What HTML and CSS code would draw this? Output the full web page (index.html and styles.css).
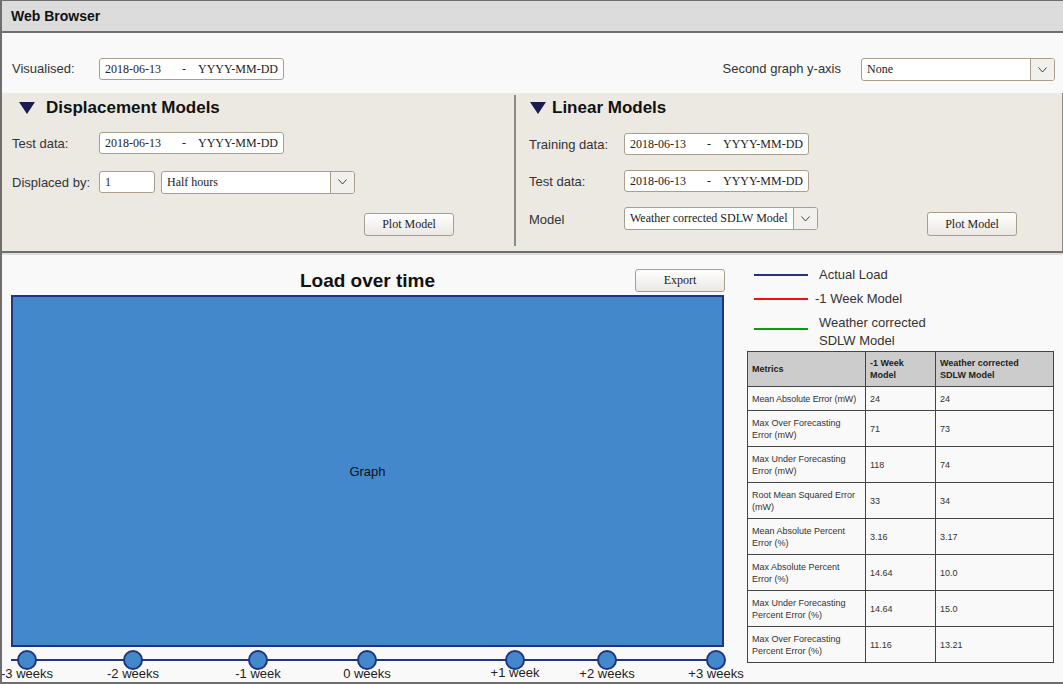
FILE: index.html
```html
<!DOCTYPE html>
<html>
<head>
<meta charset="utf-8">
<link rel="stylesheet" href="styles.css">
</head>
<body>
<div class="app">
  <div class="titlebar">Web Browser</div>

  <div class="toprow">
    <span class="label lbl-left">Visualised:</span>
    <div class="date"><span>2018-06-13</span><span class="dash">-</span><span class="ph">YYYY-MM-DD</span></div>
    <span class="spacer"></span>
    <span class="label">Second graph y-axis</span>
    <div class="select sel-none"><span class="sel-text">None</span><span class="sel-btn"><svg width="9" height="6" viewBox="0 0 9 6"><polyline points="0.5,0.5 4.5,5 8.5,0.5" fill="none" stroke="#444" stroke-width="1"/></svg></span></div>
  </div>

  <div class="panels">
    <div class="panel panel-left">
      <div class="heading"><svg class="tri" width="16" height="12" viewBox="0 0 16 12"><polygon points="0,0 16,0 8,12" fill="#1c1c4e"/></svg><span>Displacement Models</span></div>
      <div class="row r1">
        <span class="label lbl-left">Test data:</span>
        <div class="date"><span>2018-06-13</span><span class="dash">-</span><span class="ph">YYYY-MM-DD</span></div>
      </div>
      <div class="row r2">
        <span class="label lbl-left">Displaced by:</span>
        <div class="num">1</div>
        <div class="select"><span class="sel-text">Half hours</span><span class="sel-btn"><svg width="9" height="6" viewBox="0 0 9 6"><polyline points="0.5,0.5 4.5,5 8.5,0.5" fill="none" stroke="#444" stroke-width="1"/></svg></span></div>
      </div>
      <div class="row r3 btnrow-left">
        <button class="btn">Plot Model</button>
      </div>
    </div>
    <div class="divider"></div>
    <div class="panel panel-right">
      <div class="heading"><svg class="tri" width="16" height="12" viewBox="0 0 16 12"><polygon points="0,0 16,0 8,12" fill="#1c1c4e"/></svg><span>Linear Models</span></div>
      <div class="row rr1">
        <span class="label lbl-right">Training data:</span>
        <div class="date"><span>2018-06-13</span><span class="dash">-</span><span class="ph">YYYY-MM-DD</span></div>
      </div>
      <div class="row rr2">
        <span class="label lbl-right">Test data:</span>
        <div class="date"><span>2018-06-13</span><span class="dash">-</span><span class="ph">YYYY-MM-DD</span></div>
      </div>
      <div class="row rr3">
        <span class="label lbl-right model-lbl">Model</span>
        <div class="select"><span class="sel-text">Weather corrected SDLW Model</span><span class="sel-btn"><svg width="9" height="6" viewBox="0 0 9 6"><polyline points="0.5,0.5 4.5,5 8.5,0.5" fill="none" stroke="#444" stroke-width="1"/></svg></span></div>
        <button class="btn btn-right">Plot Model</button>
      </div>
    </div>
  </div>

  <div class="lower">
    <div class="graphcol">
      <div class="graphhead">
        <span></span>
        <h2 class="gtitle">Load over time</h2>
        <button class="btn btn-export">Export</button>
      </div>
      <div class="graph">Graph</div>
      <div class="timeline">
        <div class="tline"></div>
        <div class="tick" style="left:16px"><span class="dot"></span><span class="tlabel">-3 weeks</span></div>
        <div class="tick" style="left:122px"><span class="dot"></span><span class="tlabel">-2 weeks</span></div>
        <div class="tick" style="left:247px"><span class="dot"></span><span class="tlabel">-1 week</span></div>
        <div class="tick" style="left:356px"><span class="dot"></span><span class="tlabel">0 weeks</span></div>
        <div class="tick" style="left:504px"><span class="dot"></span><span class="tlabel up">+1 week</span></div>
        <div class="tick" style="left:596px"><span class="dot"></span><span class="tlabel">+2 weeks</span></div>
        <div class="tick" style="left:705px"><span class="dot"></span><span class="tlabel">+3 weeks</span></div>
      </div>
    </div>
    <div class="sidecol">
      <div class="legend">
        <div class="litem"><span class="lline blue"></span><span class="ltext">Actual Load</span></div>
        <div class="litem"><span class="lline red"></span><span class="ltext shift">-1 Week Model</span></div>
        <div class="litem"><span class="lline green low"></span><span class="ltext">Weather corrected<br>SDLW Model</span></div>
      </div>
      <table class="metrics">
        <colgroup><col class="c1"><col class="c2"><col class="c3"></colgroup>
        <thead>
          <tr class="hrow"><th>Metrics</th><th>-1 Week<br>Model</th><th>Weather corrected<br>SDLW Model</th></tr>
        </thead>
        <tbody>
          <tr class="short"><td class="nw">Mean Absolute Error (mW)</td><td>24</td><td>24</td></tr>
          <tr><td>Max Over Forecasting Error (mW)</td><td>71</td><td>73</td></tr>
          <tr><td>Max Under Forecasting Error (mW)</td><td>118</td><td>74</td></tr>
          <tr><td>Root Mean Squared Error (mW)</td><td>33</td><td>34</td></tr>
          <tr><td>Mean Absolute Percent Error (%)</td><td>3.16</td><td>3.17</td></tr>
          <tr><td>Max Absolute Percent Error (%)</td><td>14.64</td><td>10.0</td></tr>
          <tr><td>Max Under Forecasting Percent Error (%)</td><td>14.64</td><td>15.0</td></tr>
          <tr><td>Max Over Forecasting Percent Error (%)</td><td>11.16</td><td>13.21</td></tr>
        </tbody>
      </table>
    </div>
  </div>
</div>
</body>
</html>
```

FILE: styles.css
```css
* { box-sizing: border-box; }
html, body { margin: 0; padding: 0; }
body {
  font-family: "Liberation Sans", Arial, sans-serif;
  color: #333;
  background: #f9f9f9;
}
.app {
  width: 1063px;
  height: 684px;
  border-left: 2px solid #6e6e6e;
  border-bottom: 2px solid #6e6e6e;
  display: flex;
  flex-direction: column;
  overflow: hidden;
  background: #f9f9f9;
}
.titlebar {
  height: 33px;
  background: #dcdcdc;
  border-top: 1px solid #6e6e6e;
  border-bottom: 2px solid #6e6e6e;
  font-size: 14px;
  font-weight: bold;
  color: #111;
  padding-left: 9px;
  display: flex;
  align-items: center;
  flex: none;
}
.toprow {
  height: 60px;
  display: flex;
  align-items: flex-start;
  padding: 25px 8px 0 10px;
  flex: none;
}
.toprow .label { line-height: 22px; }
.spacer { flex: 1; }
.label {
  font-size: 13px;
  color: #333;
  white-space: nowrap;
}
.lbl-left { width: 87px; }
.lbl-right { width: 95px; }
.toprow .label + .select { margin-left: 20px; }
.date {
  width: 185px;
  height: 22px;
  background: #fff;
  border: 1px solid #a99d8d;
  border-radius: 3px;
  font-family: "Liberation Serif", "Times New Roman", serif;
  font-size: 12px;
  color: #222;
  display: flex;
  align-items: center;
  padding-left: 5px;
  white-space: nowrap;
}
.date .dash { margin-left: 21px; }
.date .ph { margin-left: 12px; }
.num {
  width: 56px;
  height: 22px;
  background: #fff;
  border: 1px solid #a99d8d;
  border-radius: 3px;
  font-family: "Liberation Serif", "Times New Roman", serif;
  font-size: 12px;
  color: #222;
  display: flex;
  align-items: center;
  padding-left: 5px;
  margin-right: 6px;
}
.select {
  width: 194px;
  height: 23px;
  background: #fff;
  border: 1px solid #a99d8d;
  border-radius: 3px;
  display: flex;
  align-items: stretch;
  font-family: "Liberation Serif", "Times New Roman", serif;
  font-size: 12px;
  color: #222;
}
.sel-text {
  flex: 1;
  display: flex;
  align-items: center;
  padding-left: 5px;
  white-space: nowrap;
  overflow: hidden;
}
.sel-btn {
  width: 24px;
  flex: none;
  border-left: 1px solid #a99d8d;
  background: #f2f0ec;
  border-radius: 0 2px 2px 0;
  display: flex;
  align-items: center;
  justify-content: center;
}
.panels {
  height: 160px;
  display: flex;
  background: #ece9e3;
  border-bottom: 2px solid #6e6e6e;
  flex: none;
}
.panel { display: flex; flex-direction: column; }
.panel-left { width: 512px; padding-left: 10px; }
.divider {
  width: 2px;
  background: #8a8a8a;
  margin: 2px 0 5px;
  flex: none;
}
.panel-right {
  flex: 1;
  padding-left: 13px;
  border-right: 1px solid #8a8a8a;
}
.heading {
  height: 29px;
  padding-top: 1px;
  display: flex;
  align-items: center;
  font-size: 17px;
  font-weight: bold;
  color: #111;
}
.panel-left .heading { padding-left: 7px; }
.panel-left .heading .tri { margin-right: 11px; }
.panel-right .heading { padding-left: 1px; }
.panel-right .heading .tri { margin-right: 6px; }
.row { display: flex; align-items: center; height: 22px; }
.r1 { margin-top: 10px; }
.r2 { margin-top: 17px; }
.r3 { margin-top: 20px; height: 23px; }
.btnrow-left { justify-content: flex-end; padding-right: 60px; }
.rr1 { margin-top: 11px; }
.rr2 { margin-top: 15px; }
.rr3 { margin-top: 15px; align-items: flex-start; height: 30px; }
.model-lbl { line-height: 25px; }
.btn {
  width: 90px;
  height: 23px;
  border: 1px solid #a99d8d;
  border-radius: 3px;
  background: linear-gradient(#ffffff, #ebe8e3);
  font-family: "Liberation Serif", "Times New Roman", serif;
  font-size: 12px;
  color: #222;
  padding: 0;
}
.btn-right { margin-left: 109px; margin-top: 5px; height: 24px; }
.lower {
  flex: 1;
  display: flex;
  border-top: 2px solid #dedede;
  padding-left: 9px;
}
.graphcol { width: 713px; flex: none; display: flex; flex-direction: column; }
.graphhead {
  margin-top: 12px;
  height: 28px;
  display: grid;
  grid-template-columns: 1fr auto 1fr;
  align-items: center;
}
.gtitle {
  margin: 0;
  font-size: 19px;
  font-weight: bold;
  color: #111;
  line-height: 22px;
}
.btn-export { justify-self: end; align-self: start; margin-top: 2px; margin-right: -1px; }
.graph {
  height: 352px;
  background: #4488cc;
  border: 2px solid #1f3582;
  display: flex;
  align-items: center;
  justify-content: center;
  font-size: 13px;
  color: #111;
}
.timeline { position: relative; flex: 1; }
.tline {
  position: absolute;
  left: 0;
  top: 12px;
  width: 705px;
  height: 2px;
  background: #1f3582;
}
.tick { position: absolute; top: 3px; width: 0; }
.dot {
  position: absolute;
  left: -10px;
  top: 0;
  width: 20px;
  height: 20px;
  border-radius: 50%;
  background: #4488cc;
  border: 2px solid #1f3582;
}
.tlabel {
  position: absolute;
  top: 16px;
  left: -40px;
  width: 80px;
  text-align: center;
  font-size: 13px;
  line-height: 15px;
  color: #222;
  white-space: nowrap;
}
.tlabel.up { top: 15px; }
.sidecol { margin-left: 23px; width: 306px; flex: none; }
.legend { padding-top: 11px; }
.litem {
  display: flex;
  align-items: flex-start;
  margin-bottom: 6px;
  font-size: 13px;
  line-height: 18px;
  color: #333;
}
.lline {
  width: 54px;
  height: 2px;
  margin: 8px 11px 0 7px;
  flex: none;
}
.lline.low { margin-top: 14px; }
.blue { background: #1f3582; }
.red { background: #ee1111; }
.green { background: #119911; }
.ltext.shift { margin-left: -4px; }
.metrics {
  border-collapse: collapse;
  width: 306px;
  margin-top: -5px;
  table-layout: fixed;
  font-size: 9px;
  line-height: 12px;
  color: #333;
}
.c1 { width: 118px; }
.c2 { width: 70px; }
.c3 { width: 118px; }
.metrics th, .metrics td {
  border: 1px solid #444;
  text-align: left;
  vertical-align: middle;
  padding: 0 4px;
  height: 36px;
}
.metrics th { background: #cccccc; font-weight: bold; height: 35px; color: #222; }
.metrics tr.short td { height: 24px; }
.nw { white-space: nowrap; letter-spacing: -0.1px; }
```
